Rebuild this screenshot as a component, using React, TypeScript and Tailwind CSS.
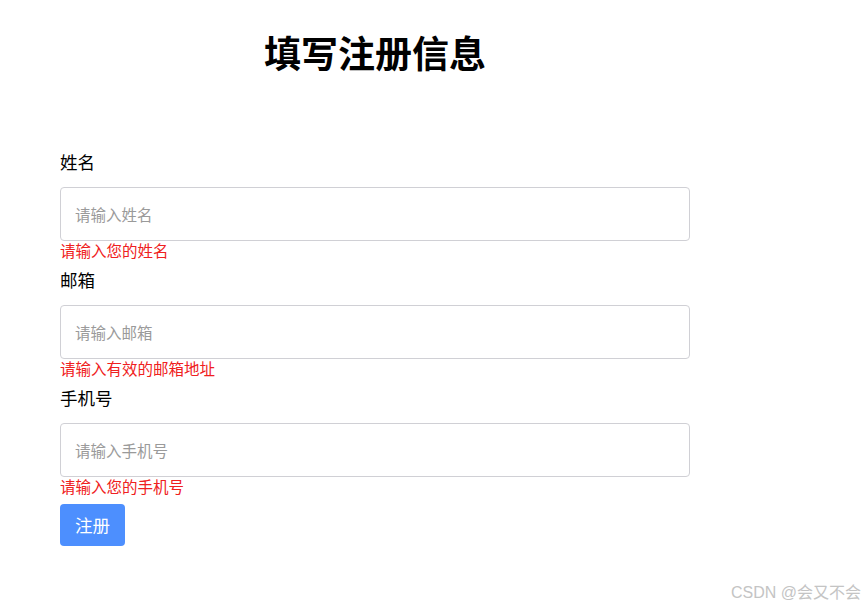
import React from "react";

const fields = [
  { label: "姓名", ph: "请输入姓名", err: "请输入您的姓名" },
  { label: "邮箱", ph: "请输入邮箱", err: "请输入有效的邮箱地址" },
  { label: "手机号", ph: "请输入手机号", err: "请输入您的手机号" },
];

export default function App() {
  return (
    <div
      className="relative w-[865px] h-[609px] bg-white text-black overflow-hidden"
      style={{ fontFamily: '"Noto Sans CJK SC", "Noto Sans", sans-serif' }}
    >
      <div className="ml-[60px] w-[630px] pt-[27px]">
        <h1 className="text-center text-[37px] leading-[50px] font-bold">填写注册信息</h1>
        <div className="mt-[74px] flex flex-col">
          {fields.map((f, i) => (
            <div key={f.label} className={i < 2 ? "mb-[8px]" : "mb-[7px]"}>
              <div className="text-[17.5px] leading-[22px]">{f.label}</div>
              <input
                placeholder={f.ph}
                className="mt-[14px] block w-[630px] h-[54px] border border-[#d0d0d5] rounded-[4px] px-[14px] text-[15.5px] placeholder:text-[#9a9a9a] outline-none"
              />
              <div className="text-[15.5px] leading-[19px] text-[#ef2020]">{f.err}</div>
              <div className="h-[1px]" />
            </div>
          ))}
          <button className="w-[65px] h-[42px] rounded-[4px] bg-[#4d8ffe] text-white text-[17.5px]">注册</button>
        </div>
      </div>
      <div
        className="absolute right-[4px] bottom-[6px] text-[16px] leading-[20px] text-[#c4c4c4]"
        style={{ fontFamily: '"Liberation Sans", "Noto Sans CJK SC", sans-serif' }}
      >
        CSDN @会又不会
      </div>
    </div>
  );
}
